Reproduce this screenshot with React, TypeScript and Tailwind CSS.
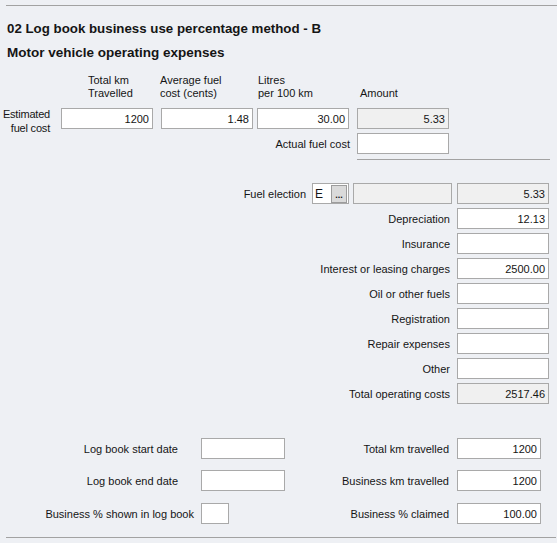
import React from "react";

function Box({ w, value, gray, cls }: { w: string; value?: string; gray?: boolean; cls?: string }) {
  return (
    <div
      className={`${w} h-[21px] shrink-0 border border-[#a9a9a9] ${gray ? "bg-[#f0f0f0]" : "bg-white"} flex items-center justify-end pr-[3px] pt-[2px] text-[11px] leading-[13px] ${cls ?? ""}`}
    >
      {value ?? ""}
    </div>
  );
}

function RightRow({ label, value, gray }: { label: string; value?: string; gray?: boolean }) {
  return (
    <div className="flex items-center justify-end gap-[7px] w-[549px] h-[21px]">
      <span className="pt-[2px] leading-[13px] whitespace-nowrap">{label}</span>
      <Box w="w-[92px]" value={value} gray={gray} />
    </div>
  );
}

export default function App() {
  return (
    <div
      className="w-[557px] h-[543px] overflow-hidden bg-[#eef0f4] pt-[5px] text-[11px] text-[#151515]"
      style={{ fontFamily: '"Liberation Sans", Arial, sans-serif' }}
    >
      <div className="ml-[6px] h-px bg-[#a2a2a2]" />
      <div className="mt-[15px] pl-[7px] h-[15px] text-[13.3px] leading-[15px] font-bold whitespace-nowrap">
        02 Log book business use percentage method - B
      </div>
      <div className="mt-[9px] pl-[7px] h-[15px] text-[13.5px] leading-[15px] font-bold whitespace-nowrap">
        Motor vehicle operating expenses
      </div>

      {/* column headers */}
      <div className="mt-[14px] flex h-[26px] leading-[13px]">
        <div className="w-[61px] shrink-0" />
        <div className="w-[92px] shrink-0 pl-[27px]">
          <div>Total km</div>
          <div>Travelled</div>
        </div>
        <div className="w-[92px] shrink-0 ml-[7px]">
          <div>Average fuel</div>
          <div>cost (cents)</div>
        </div>
        <div className="w-[92px] shrink-0 ml-[5px] pl-[1px]">
          <div>Litres</div>
          <div>per 100 km</div>
        </div>
        <div className="w-[92px] shrink-0 ml-[8px] pl-[3px]">
          <div>&nbsp;</div>
          <div>Amount</div>
        </div>
      </div>

      {/* estimated fuel cost row */}
      <div className="mt-[8px] flex items-start h-[21px]">
        <div className="w-[61px] shrink-0 pr-[11px] -mt-px text-right leading-[14px] tracking-[-0.2px]">
          <div>Estimated</div>
          <div>fuel cost</div>
        </div>
        <Box w="w-[92px]" value="1200" />
        <Box w="w-[92px]" value="1.48" cls="ml-[8px]" />
        <Box w="w-[92px]" value="30.00" cls="ml-[4px]" />
        <Box w="w-[92px]" value="5.33" gray cls="ml-[8px]" />
      </div>

      {/* actual fuel cost */}
      <div className="mt-[4px] flex items-center justify-end gap-[7px] w-[449px] h-[21px]">
        <span className="pt-[2px] leading-[13px]">Actual fuel cost</span>
        <Box w="w-[92px]" />
      </div>

      <div className="mt-[5px] ml-[357px] w-[193px] h-px bg-[#a2a2a2]" />

      {/* right-aligned rows */}
      <div className="mt-[23px] flex flex-col gap-[4px]">
        <div className="flex items-center justify-end w-[549px] h-[21px]">
          <span className="pt-[2px] leading-[13px] mr-[6px]">Fuel election</span>
          <div className="w-[37px] h-[21px] border border-[#a9a9a9] bg-white flex items-center">
            <span className="pl-[2px] w-[18px] text-[12px] leading-[14px] pt-px">E</span>
            <div className="w-[16px] h-[18px] border border-[#9c9c9c] bg-[#dadada] flex items-end justify-center text-[9px] leading-[10px] font-bold pb-[2px]">
              ...
            </div>
          </div>
          <Box w="w-[99px]" gray cls="ml-[4px]" />
          <Box w="w-[92px]" value="5.33" gray cls="ml-[5px]" />
        </div>
        <RightRow label="Depreciation" value="12.13" />
        <RightRow label="Insurance" />
        <RightRow label="Interest or leasing charges" value="2500.00" />
        <RightRow label="Oil or other fuels" />
        <RightRow label="Registration" />
        <RightRow label="Repair expenses" />
        <RightRow label="Other" />
        <RightRow label="Total operating costs" value="2517.46" gray />
      </div>

      {/* bottom section */}
      <div className="mt-[34px] flex flex-col">
        <div className="flex items-center h-[21px]">
          <div className="w-[201px] shrink-0 text-right pr-[23px] pt-[2px] leading-[13px]">Log book start date</div>
          <Box w="w-[84px]" />
          <div className="w-[5px] shrink-0" />
          <div className="w-[167px] shrink-0 text-right pr-[8px] pt-[2px] leading-[13px]">Total km travelled</div>
          <Box w="w-[84px]" value="1200" />
        </div>
        <div className="mt-[11px] flex items-center h-[21px]">
          <div className="w-[201px] shrink-0 text-right pr-[23px] pt-[2px] leading-[13px]">Log book end date</div>
          <Box w="w-[84px]" />
          <div className="w-[5px] shrink-0" />
          <div className="w-[167px] shrink-0 text-right pr-[8px] pt-[2px] leading-[13px]">Business km travelled</div>
          <Box w="w-[84px]" value="1200" />
        </div>
        <div className="mt-[12px] flex items-center h-[21px]">
          <div className="w-[201px] shrink-0 text-right pr-[7px] pt-[2px] leading-[13px] whitespace-nowrap">Business % shown in log book</div>
          <Box w="w-[28px]" />
          <div className="w-[61px] shrink-0" />
          <div className="w-[167px] shrink-0 text-right pr-[8px] pt-[2px] leading-[13px]">Business % claimed</div>
          <Box w="w-[84px]" value="100.00" />
        </div>
      </div>

      <div className="mt-[13px] ml-[6px] w-[550px] h-px bg-[#a2a2a2]" />
    </div>
  );
}
